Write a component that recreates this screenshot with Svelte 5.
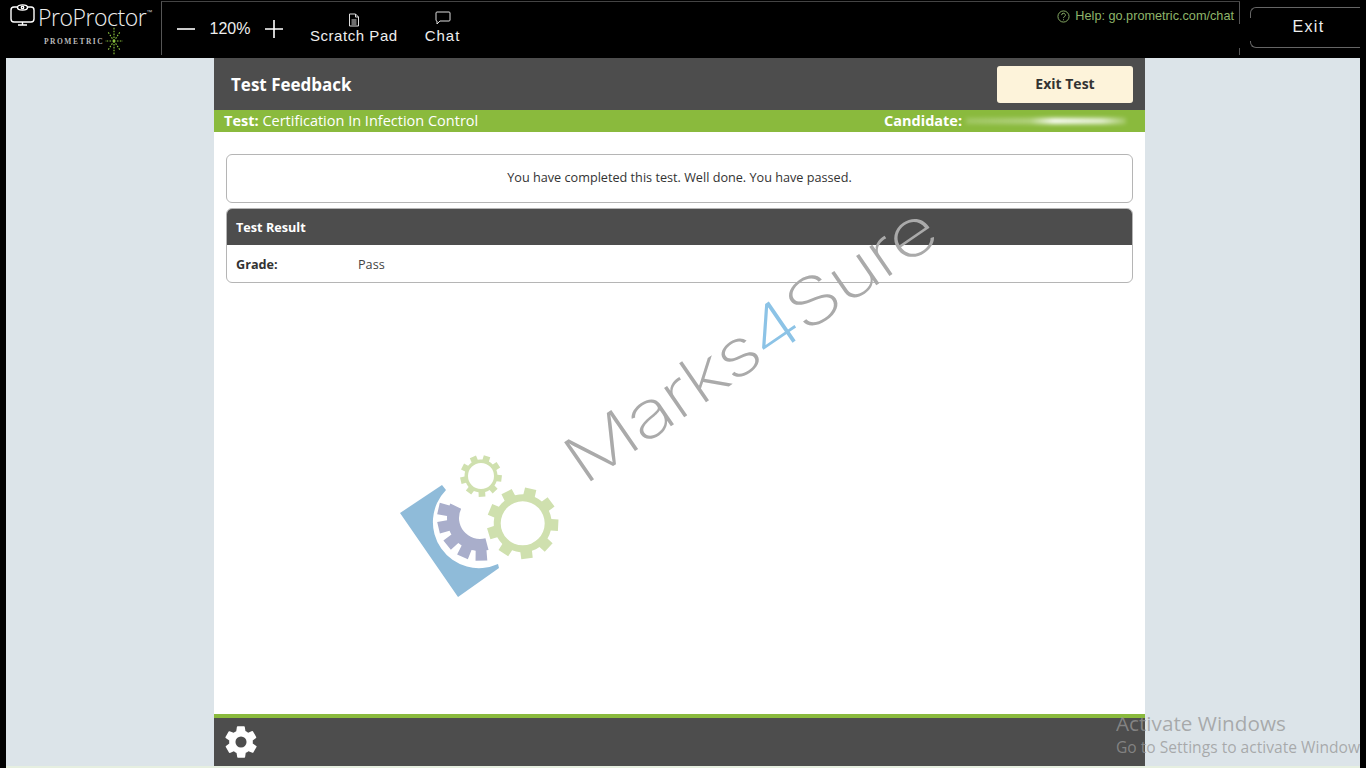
<script>
  const rad = (d) => (d * Math.PI) / 180;
  const pt = (cx, cy, r, a) =>
    `${(cx + r * Math.cos(rad(a))).toFixed(2)} ${(cy + r * Math.sin(rad(a))).toFixed(2)}`;

  // outline of a toothed arc, going from angle `from` to angle `to`
  // w = half width of a tooth tip, as a share of the tooth pitch
  function teethPoints(cx, cy, root, tip, from, to, teeth, w) {
    const step = (to - from) / teeth;
    const pts = [];
    for (let i = 0; i < teeth; i++) {
      const a = from + i * step;
      pts.push(pt(cx, cy, root, a));
      pts.push(pt(cx, cy, root, a + step * (0.44 - w)));
      pts.push(pt(cx, cy, tip, a + step * (0.5 - w)));
      pts.push(pt(cx, cy, tip, a + step * (0.5 + w)));
      pts.push(pt(cx, cy, root, a + step * (0.56 + w)));
    }
    pts.push(pt(cx, cy, root, to));
    return pts;
  }

  function gear(cx, cy, hole, root, tip, teeth, start = 0) {
    const outer = "M" + teethPoints(cx, cy, root, tip, start, start + 360, teeth, 0.23).join("L") + "Z";
    const inner = `M${cx - hole} ${cy}a${hole} ${hole} 0 1 0 ${hole * 2} 0a${hole} ${hole} 0 1 0 ${-hole * 2} 0Z`;
    return outer + inner;
  }

  function halfGear(cx, cy, hole, root, tip, from, to, teeth) {
    const outer = teethPoints(cx, cy, root, tip, from, to, teeth, 0.3).join("L");
    return `M${outer}L${pt(cx, cy, hole, to)}A${hole} ${hole} 0 0 0 ${pt(cx, cy, hole, from)}Z`;
  }

  const smallGear = gear(481, 476, 13, 16.5, 21, 9, -13);
  const bigGear = gear(522.7, 523.3, 22, 29, 36, 9, -17);
  const purpleGear = halfGear(480, 518, 21, 33, 43, 75, 206, 5);

  const rays = [0, 45, 90, 135, 180, 225, 270, 315];
</script>

<div class="screen">
  <header class="topbar">
    <div class="brand">
      <div class="brand-top">
        <svg class="monitor" viewBox="0 0 26 24" width="26" height="24" fill="none" stroke="#fff" stroke-width="1.4">
          <rect x="1" y="3" width="23" height="15" rx="3" />
          <ellipse cx="12.5" cy="3.5" rx="5" ry="2.6" fill="#000" />
          <circle cx="12.5" cy="3.5" r="1.2" />
          <path d="M8 21h9M12.5 18v3" />
        </svg>
        <span class="brand-name">ProProctor</span><span class="tm">™</span>
      </div>
      <div class="brand-sub">
        <span>PROMETRIC</span>
        <svg viewBox="0 0 20 28" width="20" height="28" stroke="#8dc63f" stroke-width="1.1" stroke-dasharray="1.6 1.3">
          {#each rays as a}
            <line x1="10" y1="14" x2={10 + 9 * Math.cos(rad(a))} y2={14 + 13.5 * Math.sin(rad(a))} />
          {/each}
        </svg>
      </div>
    </div>

    <div class="tools">
      <div class="zoom-ctl">
        <svg viewBox="0 0 18 18" width="18" height="18" stroke="#fff" stroke-width="1.6"><path d="M0 9h18" /></svg>
        <span class="zoom-val">120%</span>
        <svg viewBox="0 0 18 18" width="18" height="18" stroke="#fff" stroke-width="1.6"><path d="M0 9h18M9 0v18" /></svg>
      </div>
      <div class="tool scratch">
        <svg viewBox="0 0 12 14" width="12" height="14" fill="none" stroke="#ddd" stroke-width="1">
          <path d="M1.5 1h6l3 3v9h-9zM7.5 1v3h3M3.5 7h5M3.5 9h5M3.5 11h5" />
        </svg>
        <span>Scratch Pad</span>
      </div>
      <div class="tool chat">
        <svg viewBox="0 0 16 14" width="16" height="14" fill="none" stroke="#ddd" stroke-width="1">
          <path d="M2 1h12a1 1 0 0 1 1 1v7a1 1 0 0 1-1 1H5l-3 3v-3a1 1 0 0 1-1-1V2a1 1 0 0 1 1-1z" />
        </svg>
        <span>Chat</span>
      </div>
      <div class="help">
        <svg viewBox="0 0 14 14" width="13" height="13" fill="none" stroke="#8fb56a" stroke-width="1">
          <circle cx="7" cy="7" r="6" />
          <path d="M5 5.5a2 2 0 1 1 3 1.7c-.7.4-1 .8-1 1.5M7 10v1" />
        </svg>
        <span>Help: go.prometric.com/chat</span>
      </div>
    </div>

    <div class="exit-wrap">
      <div class="exit-btn">Exit</div>
    </div>
  </header>

  <div class="stage">
    <main class="panel">
      <div class="panel-head">
        <h1>Test Feedback</h1>
        <button class="exit-test">Exit Test</button>
      </div>
      <div class="info-bar">
        <span><b>Test:</b> Certification In Infection Control</span>
        <span class="candidate"><b>Candidate:</b><i class="smudge"></i></span>
      </div>

      <div class="content">
        <div class="message">You have completed this test. Well done. You have passed.</div>
        <section class="result">
          <div class="result-head">Test Result</div>
          <div class="result-row">
            <b>Grade:</b>
            <span>Pass</span>
          </div>
        </section>
      </div>

      <div class="panel-foot">
        <svg viewBox="0 0 24 24" width="38" height="38" fill="#fff" fill-rule="evenodd">
          <path d="M19.4 13a7.6 7.6 0 0 0 0-2l2.1-1.6a.5.5 0 0 0 .1-.6l-2-3.5a.5.5 0 0 0-.6-.2l-2.5 1a7.3 7.3 0 0 0-1.7-1l-.4-2.6a.5.5 0 0 0-.5-.4h-4a.5.5 0 0 0-.5.4l-.4 2.7a7.7 7.7 0 0 0-1.7 1l-2.5-1a.5.5 0 0 0-.6.2l-2 3.4a.5.5 0 0 0 .1.6L4.6 11a7.9 7.9 0 0 0 0 2l-2.1 1.6a.5.5 0 0 0-.1.6l2 3.5c.1.2.4.3.6.2l2.5-1a7.3 7.3 0 0 0 1.7 1l.4 2.6c0 .2.2.4.5.4h4c.3 0 .5-.2.5-.4l.4-2.7a7.7 7.7 0 0 0 1.7-1l2.5 1c.2.1.5 0 .6-.2l2-3.5a.5.5 0 0 0-.1-.6zM12 15.5a3.5 3.5 0 1 1 0-7 3.5 3.5 0 0 1 0 7z" />
        </svg>
      </div>
    </main>
  </div>

  <!-- watermark sits over the page -->
  <svg class="logo-mark" viewBox="0 0 1366 768" width="1366" height="768">
    <path fill="#8fbbd9" d="M400 513L442 485L446 490A46 46 0 0 0 498 564L499 568L458 597Z" />
    <path fill="#a9aecb" d={purpleGear} />
    <path fill="#cfe0ae" fill-rule="evenodd" d={smallGear} />
    <path fill="#cfe0ae" fill-rule="evenodd" d={bigGear} />
  </svg>
  <div class="watermark">Marks<span>4</span>Sure</div>

  <div class="activate">
    <div class="a1">Activate Windows</div>
    <div class="a2">Go to Settings to activate Windows.</div>
  </div>
</div>

<style>
  :global(body) {
    margin: 0;
    background: #000;
  }

  .screen {
    position: relative;
    width: 1366px;
    height: 768px;
    overflow: hidden;
    background: #000;
    font-family: "Open Sans", sans-serif;
  }

  .topbar {
    display: flex;
    height: 58px;
    background: #000;
    color: #fff;
    font-family: "Liberation Sans", sans-serif;
  }

  .brand {
    width: 161px;
    flex: none;
    padding: 4px 0 0 10px;
    box-sizing: border-box;
  }

  .brand-top {
    display: flex;
    align-items: center;
    height: 26px;
  }

  .monitor {
    margin-top: -2px;
    margin-right: 2px;
  }

  .brand-name {
    font-family: "Open Sans", sans-serif;
    font-weight: 300;
    font-size: 23px;
    letter-spacing: -0.45px;
    color: #eee;
  }

  .tm {
    font-size: 6px;
    margin-top: -10px;
    color: #ccc;
  }

  .brand-sub {
    display: flex;
    align-items: center;
    gap: 0;
    padding-left: 34px;
    margin-top: -3px;
    font-family: "Liberation Serif", serif;
    font-size: 7.5px;
    font-weight: bold;
    letter-spacing: 1.5px;
    color: #bbb;
  }

  .tools {
    flex: 1;
    height: 54px;
    margin-top: 1px;
    border-left: 1px solid #555;
    border-top: 1px solid #444;
    background: linear-gradient(#555 0 22px, transparent 22px 46px, #555 46px) right / 1px 100% no-repeat;
    display: flex;
    align-items: flex-start;
    padding-left: 15px;
    box-sizing: border-box;
  }

  .zoom-ctl {
    display: flex;
    align-items: center;
    gap: 14.5px;
    height: 54px;
    margin-right: 27px;
  }

  .zoom-val {
    font-size: 16px;
    color: #eee;
  }

  .tool {
    display: flex;
    flex-direction: column;
    align-items: center;
    padding-top: 11px;
    font-size: 15px;
    letter-spacing: 0.55px;
    line-height: 16px;
    color: #eee;
  }

  .tool span {
    margin-top: 1px;
  }

  .scratch {
    margin-right: 27px;
  }

  .chat {
    padding-top: 9px;
    letter-spacing: 1px;
  }

  .chat span {
    margin-top: 3px;
  }

  .help {
    margin-left: auto;
    margin-right: 6px;
    padding-top: 7px;
    display: flex;
    align-items: center;
    gap: 5px;
    font-size: 12.7px;
    color: #8fb56a;
  }

  .exit-wrap {
    width: 126px;
    flex: none;
    padding: 7px 6px 0 10px;
    box-sizing: border-box;
  }

  .exit-btn {
    position: relative;
    height: 41px;
    border: 1px solid #666;
    border-right: none;
    border-radius: 6px 0 0 6px;
    box-sizing: border-box;
    display: flex;
    align-items: center;
    justify-content: center;
    font-size: 16px;
    letter-spacing: 1.3px;
    color: #eee;
    padding: 0 0 2px 6px;
  }

  /* left edge of the button only shows near its corners */
  .exit-btn::before {
    content: "";
    position: absolute;
    left: -1px;
    top: 10px;
    bottom: 6px;
    width: 1px;
    background: #000;
  }

  .stage {
    height: 710px;
    margin: 0 6px;
    background: #dce4e9;
    border-bottom: 2px solid #e6efe0;
    display: flex;
    justify-content: center;
    padding-right: 7px;
    box-sizing: border-box;
  }

  .panel {
    width: 931px;
    height: 708px;
    background: #fff;
    display: flex;
    flex-direction: column;
  }

  .panel-head {
    height: 52px;
    flex: none;
    background: #4d4d4d;
    display: flex;
    align-items: center;
    justify-content: space-between;
    padding: 0 12px 0 17px;
  }

  h1 {
    margin: 0;
    font-size: 17px;
    font-weight: 700;
    color: #fff;
  }

  .exit-test {
    width: 136px;
    height: 37px;
    padding: 0 0 2px;
    background: #fdf3da;
    border: none;
    border-radius: 3px;
    font-family: inherit;
    font-size: 14px;
    font-weight: 700;
    color: #333;
  }

  .info-bar {
    height: 22px;
    flex: none;
    background: #8aba3d;
    display: flex;
    align-items: center;
    justify-content: space-between;
    padding: 0 0 1px 10px;
    box-sizing: border-box;
    font-size: 14.5px;
    color: #fff;
  }

  .candidate {
    display: flex;
    align-items: center;
    width: 261px;
  }

  .smudge {
    width: 160px;
    height: 6px;
    margin-left: 4px;
    background: linear-gradient(90deg, rgba(255, 255, 255, 0.2), rgba(255, 255, 255, 0.35) 40%, #fff 55%, rgba(255, 255, 255, 0.8) 85%, rgba(255, 255, 255, 0.2));
    filter: blur(2px);
  }

  .content {
    flex: 1;
    padding: 22px 12px 0;
    display: flex;
    flex-direction: column;
    gap: 5px;
  }

  .message {
    height: 49px;
    box-sizing: border-box;
    border: 1px solid #b5b5b5;
    border-radius: 6px;
    display: flex;
    align-items: center;
    justify-content: center;
    padding-bottom: 4px;
    font-size: 12.66px;
    color: #333;
  }

  .result {
    border: 1px solid #b5b5b5;
    border-radius: 6px;
    overflow: hidden;
    font-size: 12.66px;
  }

  .result-head {
    height: 36px;
    background: #4d4d4d;
    color: #fff;
    font-weight: 700;
    display: flex;
    align-items: center;
    padding-left: 9px;
  }

  .result-row {
    height: 37px;
    display: flex;
    align-items: center;
    padding-left: 9px;
    color: #444;
  }

  .result-row b {
    width: 122px;
    color: #333;
  }

  .panel-foot {
    height: 48px;
    flex: none;
    background: #4d4d4d;
    border-top: 4px solid #8aba3d;
    display: flex;
    align-items: center;
    padding-left: 8px;
  }

  .logo-mark {
    position: absolute;
    left: 0;
    top: 0;
    pointer-events: none;
  }

  .watermark {
    position: absolute;
    left: 552px;
    top: 440px;
    font-family: "Inter", sans-serif;
    font-weight: 200;
    font-size: 65px;
    line-height: 1;
    letter-spacing: -2px;
    color: #aaa;
    transform: rotate(-34.5deg) scaleX(1.28);
    transform-origin: 0 0;
    white-space: nowrap;
    pointer-events: none;
  }

  .watermark span {
    color: #8cc3e6;
  }

  .activate {
    position: absolute;
    left: 1116px;
    top: 710px;
    width: 244px;
    overflow: hidden;
    white-space: nowrap;
    color: rgba(150, 150, 150, 0.75);
    pointer-events: none;
  }

  .a1 {
    font-size: 20.7px;
    line-height: 27px;
  }

  .a2 {
    font-size: 15.6px;
    line-height: 21px;
  }
</style>
